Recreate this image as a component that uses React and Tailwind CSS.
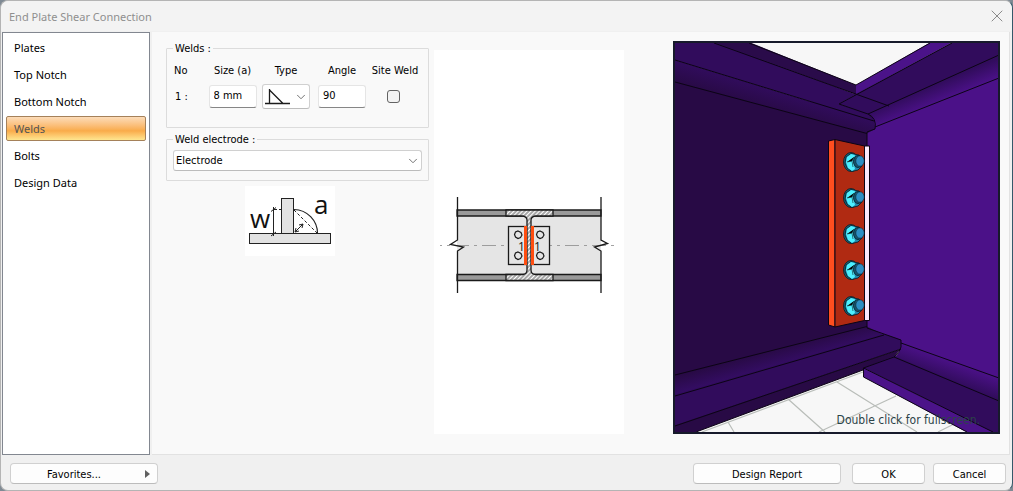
import clsx from 'clsx';
import { ChevronDown, X } from 'lucide-react';

const PAGES = ['Plates', 'Top Notch', 'Bottom Notch', 'Welds', 'Bolts', 'Design Data'];
const BOLT_ROWS = [121, 157, 193, 229, 265];

function GroupBox({ title, className, children }) {
  return (
    <fieldset className={clsx('rounded-[1px] border border-[#dcdcdc] px-[6px]', className)}>
      <legend className="px-[2px] pt-[2px] leading-[14px]">{title}</legend>
      {children}
    </fieldset>
  );
}

function PushButton({ className, children }) {
  return (
    <button type="button" className={clsx('h-[21px] rounded-[4px] border border-[#d0d0d0] border-b-[#bcbcbc] bg-[#fdfdfd] pt-[2px] leading-4', className)}>
      {children}
    </button>
  );
}

function Sidebar() {
  return (
    <nav className="w-[148px] shrink-0 border border-[#828790] bg-white px-[3px] pt-[2px] font-['Noto_Sans',sans-serif]">
      {PAGES.map(page => (
        <button
          key={page}
          type="button"
          className={clsx(
            'mb-[2px] block h-[25px] w-full rounded-[2px] border px-[7px] pt-[2px] text-left',
            page === 'Welds'
              ? 'border-[#a5815a] bg-linear-to-b from-[#fcdcb8] via-[#f9ab49] via-60% to-[#fee68f] text-[#555555]'
              : 'border-transparent',
          )}
        >
          {page}
        </button>
      ))}
    </nav>
  );
}

function WeldTable() {
  const box = 'mx-auto block h-[23px] w-12 rounded-[3px] border border-[#e5e5e5] border-b-[#868686] bg-white pb-[2px] pl-1';
  return (
    <table className="table-fixed">
      <colgroup>
        <col className="w-[33px]" />
        <col className="w-[53px]" />
        <col className="w-[54px]" />
        <col className="w-[58px]" />
        <col className="w-12" />
      </colgroup>
      <thead>
        <tr className="h-[27px] whitespace-nowrap">
          <th className="pl-[1px] pt-[3px] text-left font-normal">No</th>
          <th className="pt-[3px] font-normal">Size (a)</th>
          <th className="pt-[3px] font-normal">Type</th>
          <th className="pt-[3px] font-normal">Angle</th>
          <th className="pt-[3px] font-normal">Site Weld</th>
        </tr>
      </thead>
      <tbody>
        <tr className="h-[26px]">
          <td className="pl-[2px] pt-[2px]">1 :</td>
          <td><input className={box} aria-label="Size (a)" defaultValue="8 mm" /></td>
          <td>
            <div className="relative mx-auto h-[25px] w-12">
              <select aria-label="Type" className="h-full w-full appearance-none rounded-[3px] border border-[#d0d0d0] border-b-[#bcbcbc] bg-white text-transparent">
                <option>Fillet</option>
              </select>
              <svg className="pointer-events-none absolute left-[2px] top-1 h-[17px] w-[26px]" viewBox="0 0 26 17" fill="none" stroke="#1c1c1c" strokeWidth="1.3">
                <path d="M1 15.5H26M5.5 1V15.5M5.5 2L19 15.5" />
              </svg>
              <ChevronDown className="pointer-events-none absolute right-[2px] top-[6px] h-[14px] w-[14px] text-[#606060]" strokeWidth={1.5} />
            </div>
          </td>
          <td><input className={box} aria-label="Angle" defaultValue="90" /></td>
          <td className="pr-1"><input type="checkbox" aria-label="Site Weld" className="mx-auto block h-[13px] w-[13px] appearance-none rounded-[3px] border border-[#636363] bg-[#f3f3f3]" /></td>
        </tr>
      </tbody>
    </table>
  );
}

function FilletSketch() {
  return (
    <svg className="ml-[79px] mt-[5px] h-[70px] w-[90px] bg-white" viewBox="0 0 90 70" fill="none" stroke="#222" strokeWidth="1">
      <rect x="36.5" y="12.5" width="12" height="35" fill="#e2e2e2" />
      <rect x="4.5" y="47.5" width="81" height="10" fill="#e2e2e2" />
      <path d="M28.5 21V50M26 25.5l5-4M26 50l5-4" />
      <path d="M49 23.5A24 24 0 0 1 72.5 47.5" strokeWidth="1.2" />
      <path d="M29 23.5H37M49 24L72 47" strokeDasharray="3 2" />
      <path d="M50 46L58 38M50 46l1-4M50 46l4-1M58 38l-4 1M58 38l-1 4" />
      <g fill="#111" stroke="none" className="font-['Open_Sans',sans-serif] text-[26px]">
        <text x="5" y="42">w</text>
        <text x="69" y="28">a</text>
      </g>
    </svg>
  );
}

function SectionDrawing() {
  return (
    <svg className="w-full" viewBox="0 0 190 110" fill="none" stroke="#1a1a1a" strokeWidth="1.3">
      <defs>
        <pattern id="hatch" width="3" height="3" patternUnits="userSpaceOnUse" patternTransform="rotate(45)">
          <rect width="3" height="3" fill="#fff" stroke="none" />
          <path d="M1 0V3" stroke="#222" strokeWidth=".8" />
        </pattern>
      </defs>
      <rect x="23" y="20" width="144" height="71" fill="#e5e5e5" stroke="none" />
      <path d="M23 20H167V26H23ZM23 84.5H167V90.5H23Z" fill="#9a9a9a" />
      <path d="M72 20H119V26H101Q97 27 97 30V80Q97 84 101 84.5H119V90.5H72V84.5H89Q93 84 93 80V30Q93 27 89 26H72Z" fill="url(#hatch)" />
      <path d="M6 55.5H74M116 55.5H180" stroke="#8a8a8a" strokeWidth=".8" strokeDasharray="14 5 3 5" strokeDashoffset="12" />
      <rect x="74.5" y="36.5" width="17" height="38" fill="#e5e5e5" />
      <rect x="98.5" y="36.5" width="17" height="38" fill="#e5e5e5" />
      <path d="M91.5 36V75M98.5 36V75" stroke="#ff4e10" strokeWidth="3" />
      <g strokeWidth="1.2">
        <path d="M84 41l3 1.5 1 2.5-1.5 2.5-2.5 1-2.5-1.5-1-2.5 1-2.5ZM84 62l3 1.5 1 2.5-1.5 2.5-2.5 1-2.5-1.5-1-2.5 1-2.5Z" />
        <path d="M106 41l3 1.5 1 2.5-1.5 2.5-2.5 1-2.5-1.5-1-2.5 1-2.5ZM106 62l3 1.5 1 2.5-1.5 2.5-2.5 1-2.5-1.5-1-2.5 1-2.5Z" />
      </g>
      <path d="M23.5 7V50L16.5 54.5L29.5 57L23.5 61V103M167 7V50L173.5 53.5L160.5 57L167 61V103" />
      <g fill="#111" stroke="none" className="font-['Open_Sans',sans-serif] text-[12px]">
        <text x="84" y="61">1</text>
        <text x="100" y="61">1</text>
      </g>
    </svg>
  );
}

function Bolt({ y }) {
  return (
    <g transform={`translate(180 ${y})`} stroke="#061c24" strokeWidth=".8">
      <ellipse cx="-2" cy="0" rx="7.5" ry="9.5" fill="#1b6478" />
      <path d="M-7-5L-2-8.5L6-7L10-3L9 4L5 8L-1 9.5L-6 6L-8 1Z" fill="#2389ad" />
      <path d="M-6-5L-2-8L2-7L0-1L2 7L-1 9L-5 6L-7 0Z" fill="#4df0ff" stroke="none" />
      <path d="M-6 0L-1-1L1-5M-1-1L0 5" strokeWidth=".6" />
      <ellipse cx="5" cy="-.5" rx="4.5" ry="6" fill="#17566e" />
      <ellipse cx="7" cy="-1" rx="4.2" ry="5.2" fill="#2d8fc4" strokeWidth=".5" />
    </g>
  );
}

function Viewport3D() {
  return (
    <div className="relative">
      <svg className="block w-full" viewBox="0 0 327 393">
        <defs>
          <linearGradient id="topLeft" gradientUnits="userSpaceOnUse" x1="90" y1="46" x2="84" y2="66">
            <stop offset="0" stopColor="#310c5c" />
            <stop offset="1" stopColor="#280a45" />
          </linearGradient>
          <linearGradient id="topRight" gradientUnits="userSpaceOnUse" x1="260" y1="44" x2="267" y2="61">
            <stop offset="0" stopColor="#310c5c" />
            <stop offset="1" stopColor="#4b1188" />
          </linearGradient>
          <linearGradient id="bottomLeft" gradientUnits="userSpaceOnUse" x1="90" y1="311" x2="95" y2="329">
            <stop offset="0" stopColor="#280a45" />
            <stop offset="1" stopColor="#350d66" />
          </linearGradient>
          <linearGradient id="bottomRight" gradientUnits="userSpaceOnUse" x1="280" y1="320" x2="273" y2="339">
            <stop offset="0" stopColor="#4b1188" />
            <stop offset="1" stopColor="#310c5c" />
          </linearGradient>
        </defs>
        <rect width="327" height="393" fill="#f7f7f7" />

        <g stroke="#b9bdb9" strokeWidth="1.2">
          <path d="M29 391L190 331M55 381L61 391M115 358L152 391M164 341L244 391M223 355L146 391M285 381L265 391" />
        </g>

        <path d="M0 38L194 70L203 78V90L194 94V290L0 338Z" fill="#280a45" />
        <path d="M194 91L203 84L327 35V340L228 306L194 290Z" fill="#4b1188" />
        <g stroke="#0c0415" strokeWidth="1">
          <path d="M0 0H41L183 53.5L166 63L195 73L201 80L0 19Z" fill="#310c5c" stroke="none" />
          <path d="M41 1L76 1L183 44V53.5Z" fill="#2a0b4a" stroke="none" />
          <path d="M183 44L258 1H280L183 53.5Z" fill="#4b1389" stroke="none" />
          <path d="M182 53.5L280 1H327V15L195 74L165 63Z" fill="#310c5c" stroke="none" />
          <path d="M0 18.5L201 80L202 88L194 92.5L0 40.5Z" fill="url(#topLeft)" stroke="none" />
          <path d="M195 73L327 14V37L202 86Q201 76 195 73Z" fill="url(#topRight)" stroke="none" />
          <path
            fill="none"
            d="M76 2L183 44L257 2M41 2L216 65M279 2L166 63L195 73L326 14M2 19L201 80M2 41L194 92.5M202 86L326 37M195 73Q204 77 202 88L194 91V105"
          />

          <path d="M0 334L194 285.5L211 294L0 355Z" fill="url(#bottomLeft)" stroke="none" />
          <path d="M0 354L211 293L228 299V308L0 386Z" fill="#310c5c" stroke="none" />
          <path d="M0 385L228 308L221 316L190 329L23 391H0Z" fill="#280a45" stroke="none" />
          <path d="M228 302L327 337V361L221 316Q228 312 228 302Z" fill="url(#bottomRight)" stroke="none" />
          <path d="M190.5 327L221 315L327 360V393H322Z" fill="#310c5c" stroke="none" />
          <path d="M190.5 327L324 393H297L190.5 336Z" fill="#4b1389" stroke="none" />
          <path
            fill="none"
            d="M2 334L194 285.5M2 355L211 294M2 385L228 308M23 391L190 329M194 279V287L228 299V306Q227 312 221 316L190.5 327V336L294 391M190.5 327L320 391M221 316L326 360M228 302L326 337"
          />

          <path d="M191.5 105H196.5V279.5H191.5Z" fill="#fbeafd" />
          <path d="M155.500 100L162 98.500V286L155.500 284Z" fill="#ff4e1f" />
          <path d="M162 98.500L191.500 105V279.500L162 286Z" fill="#b02a12" />
        </g>
        {BOLT_ROWS.map(y => <Bolt key={y} y={y} />)}
        <rect x="1" y="1" width="325" height="391" fill="none" stroke="#171a2b" strokeWidth="2" />
      </svg>
      <span className="absolute bottom-1 right-5 text-[12px] leading-5 text-[#2c4347]">Double click for fullscreen.</span>
    </div>
  );
}

export default function App() {
  return (
    <div className="h-screen bg-[#7f8a94] font-['DejaVu_Sans_Condensed','Noto_Sans',sans-serif] text-[11px] text-black">
      <div className="flex h-full flex-col rounded-lg border border-[#b4b4b4] border-r-[#35586a] bg-[#f0f0f0]">
        <header className="flex h-[30px] items-center justify-between rounded-t-lg bg-[#f3f3f3] pl-2 pr-[5px]">
          <h1 className="pt-[2px] font-['Noto_Sans',sans-serif] text-[#8f8f8f]">End Plate Shear Connection</h1>
          <button type="button" aria-label="Close"><X className="h-5 w-5 text-[#8a8a8a]" strokeWidth={1.2} /></button>
        </header>

        <div className="flex min-h-0 flex-1 pl-px pt-px">
          <Sidebar />
          <main className="ml-[2px] mr-[2px] flex flex-1 items-start border-b border-r border-[#e2e2e2] bg-[#f9f9f9] pl-[14px] pr-[9px] pt-2">
            <div className="w-[263px] shrink-0">
              <GroupBox title="Welds :" className="h-[88px]">
                <WeldTable />
              </GroupBox>
              <GroupBox title="Weld electrode :" className="mt-[3px] h-[50px]">
                <div className="relative mt-[3px]">
                  <select aria-label="Weld electrode" className="block h-[21px] w-full appearance-none rounded-[3px] border border-[#d0d0d0] border-b-[#bcbcbc] bg-white pl-[2px] pt-[2px]">
                    <option>Electrode</option>
                  </select>
                  <ChevronDown className="pointer-events-none absolute right-[2px] top-1 h-[14px] w-[14px] text-[#606060]" strokeWidth={1.5} />
                </div>
              </GroupBox>
              <FilletSketch />
            </div>
            <div className="ml-[5px] mt-[10px] h-[384px] w-[190px] shrink-0 bg-white pt-[140px]">
              <SectionDrawing />
            </div>
            <div className="ml-[49px] mt-px flex-1">
              <Viewport3D />
            </div>
          </main>
        </div>

        <footer className="flex h-[35px] shrink-0 items-center gap-2 pl-[9px] pr-[6px] pt-[2px]">
          <PushButton className="relative mr-auto w-[148px] pr-5">
            Favorites...
            <svg className="absolute right-[7px] top-[6px] h-2 w-[5px]" viewBox="0 0 5 8" fill="#606060"><path d="M0 0L5 4L0 8Z" /></svg>
          </PushButton>
          <PushButton className="mr-[3px] w-[148px]">Design Report</PushButton>
          <PushButton className="w-[73px]">OK</PushButton>
          <PushButton className="w-[73px]">Cancel</PushButton>
        </footer>
      </div>
    </div>
  );
}
